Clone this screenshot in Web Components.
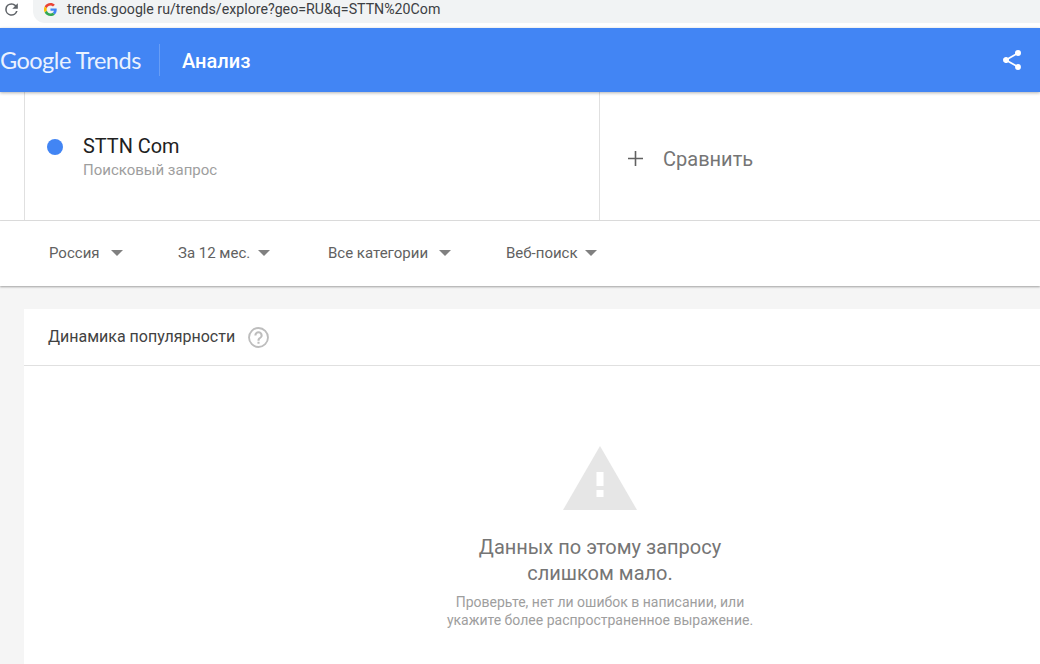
<!DOCTYPE html>
<html>
<head>
<meta charset="utf-8">
<title>Google Trends</title>
<style>
    html, body {
        margin: 0;
        height: 664px;
        overflow: hidden;
        background: #f5f5f5;
        font-family: Roboto, "Liberation Sans", sans-serif;
    }
</style>
</head>
<body>
<browser-bar url="trends.google ru/trends/explore?geo=RU&amp;q=STTN%20Com"></browser-bar>
<trends-header section="Анализ"></trends-header>
<term-row term="STTN Com" kind="Поисковый запрос" action="Сравнить"></term-row>
<filter-row>
    <filter-select style="width:129px">Россия</filter-select>
    <filter-select style="width:150px;--arrow-gap:8px">За 12 мес.</filter-select>
    <filter-select style="width:178px">Все категории</filter-select>
    <filter-select style="--arrow-gap:7px">Веб-поиск</filter-select>
</filter-row>
<trend-card heading="Динамика популярности">
    <empty-state title-text="Данных по этому запросу слишком мало.">
        Проверьте, нет ли ошибок в написании, или<br>укажите более распространенное выражение.
    </empty-state>
</trend-card>

<script>
class BrowserBar extends HTMLElement {

    constructor() {

        super();

        this.theRoot = this.attachShadow({mode: 'open'});
        this.theRoot.innerHTML = `
            <style>
                :host {
                    display: flex;
                    align-items: flex-start;
                    height: 28px;
                    background: #fff;
                    box-sizing: border-box;
                    overflow: hidden;
                }
                .reload {
                    width: 33px;
                    flex: none;
                }
                .reload svg {
                    display: block;
                    margin-left: 2px;
                }
                .omnibox {
                    flex: 1;
                    height: 23px;
                    display: flex;
                    align-items: flex-start;
                    background: #f1f3f4;
                    border-bottom-left-radius: 12px;
                    padding-left: 11px;
                }
                .omnibox svg {
                    flex: none;
                    margin-top: 3px;
                }
                .url {
                    margin-left: 10px;
                    font: 14.2px/18px Roboto, sans-serif;
                    color: #3c4043;
                    white-space: nowrap;
                }
            </style>
            <div class="reload">
                <svg width="19" height="19" viewBox="0 0 24 24"><path fill="#5f6368" d="M17.65 6.35A7.96 7.96 0 0 0 12 4a8 8 0 1 0 7.73 10h-2.08A6 6 0 1 1 12 6c1.66 0 3.14.69 4.22 1.78L13 11h7V4l-2.35 2.35z"/></svg>
            </div>
            <div class="omnibox">
                <svg width="13" height="13" viewBox="0 0 48 48">
                    <path fill="#ea4335" d="M24 9.5c3.5 0 6.700 1.200 9.200 3.600l6.900-6.900C35.900 2.400 30.500 0 24 0 14.600 0 6.500 5.400 2.600 13.200l8 6.200C12.500 13.700 17.800 9.500 24 9.500z"/>
                    <path fill="#4285f4" d="M46.900 24.500c0-1.600-.1-3.100-.4-4.500H24v9h12.900c-.6 3-2.200 5.500-4.700 7.200l7.700 6c4.500-4.200 7-10.300 7-17.700z"/>
                    <path fill="#fbbc05" d="M10.500 28.600A14.500 14.500 0 0 1 10.500 19.400l-8-6.200a24 24 0 0 0 0 21.600l8-6.200z"/>
                    <path fill="#34a853" d="M24 48c6.500 0 11.900-2.100 15.900-5.800l-7.700-6c-2.200 1.400-4.900 2.300-8.200 2.300-6.200 0-11.500-4.200-13.400-9.900l-8 6.200C6.500 42.600 14.600 48 24 48z"/>
                </svg>
                <span class="url"></span>
            </div>
        `;
    }

    connectedCallback() {

        this.theRoot.querySelector('.url').textContent = this.getAttribute('url');
    }
}

class TrendsHeader extends HTMLElement {

    constructor() {

        super();

        this.theRoot = this.attachShadow({mode: 'open'});
        this.theRoot.innerHTML = `
            <style>
                :host {
                    display: flex;
                    align-items: center;
                    height: 64px;
                    background: #4285f4;
                    color: #fff;
                    box-shadow: 0 1px 3px rgba(0, 0, 0, .3);
                    position: relative;
                    z-index: 2;
                }
                .logo {
                    width: 142px;
                    font: 400 23.5px/30px Lato, sans-serif;
                    letter-spacing: -.5px;
                    white-space: nowrap;
                    color: #eaf1fe;
                    flex: none;
                }
                .divider {
                    width: 1px;
                    height: 32px;
                    margin-left: 17px;
                    background: rgba(255, 255, 255, .2);
                    flex: none;
                }
                .section {
                    margin-left: 22px;
                    font: 500 20px/24px Roboto, sans-serif;
                    padding-top: 2px;
                    flex: 1;
                }
                svg {
                    flex: none;
                    margin-right: 16px;
                }
            </style>
            <div class="logo">Google Trends</div>
            <div class="divider"></div>
            <div class="section"></div>
            <svg width="24" height="24" viewBox="0 0 24 24"><path fill="#fff" d="M18 16.080c-.76 0-1.440.3-1.960.77L8.910 12.700c.05-.23.090-.46.090-.7s-.04-.47-.09-.7l7.050-4.110c.54.5 1.250.81 2.040.81a3 3 0 1 0-3-3c0 .24.040.47.090.7L8.040 9.810A2.990 2.990 0 0 0 3 12a3 3 0 0 0 5.040 2.190l7.120 4.160c-.05.21-.08.43-.08.65A2.920 2.920 0 1 0 18 16.080z"/></svg>
        `;
    }

    connectedCallback() {

        this.theRoot.querySelector('.section').textContent = this.getAttribute('section');
    }
}

class TermRow extends HTMLElement {

    constructor() {

        super();

        this.theRoot = this.attachShadow({mode: 'open'});
        this.theRoot.innerHTML = `
            <style>
                :host {
                    display: flex;
                    height: 129px;
                    background: #fff;
                    border-bottom: 1px solid #e0e0e0;
                    box-sizing: border-box;
                    padding-left: 24px;
                }
                .term {
                    width: 576px;
                    flex: none;
                    box-sizing: border-box;
                    border-left: 1px solid #e0e0e0;
                    border-right: 1px solid #e0e0e0;
                    display: flex;
                    align-items: flex-start;
                    padding: 44px 0 0 22px;
                }
                .dot {
                    width: 16px;
                    height: 16px;
                    margin-top: 3px;
                    border-radius: 50%;
                    background: #4285f4;
                    flex: none;
                }
                .labels {
                    margin-left: 20px;
                }
                .name {
                    font: 400 19.9px/22px Roboto, sans-serif;
                    color: #212121;
                }
                .kind {
                    font: 400 15px/17px Roboto, sans-serif;
                    margin-top: 4px;
                    color: #9e9e9e;
                }
                .compare {
                    flex: 1;
                    display: flex;
                    align-items: center;
                    padding-left: 28px;
                    height: 134px;
                    color: #757575;
                }
                .compare svg {
                    flex: none;
                    margin-top: -2px;
                }
                .action {
                    margin-left: 20px;
                    font: 400 20px/24px Roboto, sans-serif;
                }
            </style>
            <div class="term">
                <div class="dot"></div>
                <div class="labels">
                    <div class="name"></div>
                    <div class="kind"></div>
                </div>
            </div>
            <div class="compare">
                <svg width="15" height="15" viewBox="0 0 15 15"><path fill="#616161" d="M6.700 0h1.600v6.700H15v1.600H8.300V15H6.700V8.300H0V6.700h6.700z"/></svg>
                <span class="action"></span>
            </div>
        `;
    }

    connectedCallback() {

        this.theRoot.querySelector('.name').textContent = this.getAttribute('term');
        this.theRoot.querySelector('.kind').textContent = this.getAttribute('kind');
        this.theRoot.querySelector('.action').textContent = this.getAttribute('action');
    }
}

class FilterRow extends HTMLElement {

    constructor() {

        super();

        this.theRoot = this.attachShadow({mode: 'open'});
        this.theRoot.innerHTML = `
            <style>
                :host {
                    display: flex;
                    align-items: center;
                    box-sizing: border-box;
                    height: 65px;
                    padding: 0 0 2px 49px;
                    background: #fff;
                    box-shadow: 0 1px 2px rgba(0, 0, 0, .35);
                    position: relative;
                }
            </style>
            <slot></slot>
        `;
    }
}

class FilterSelect extends HTMLElement {

    constructor() {

        super();

        this.theRoot = this.attachShadow({mode: 'open'});
        this.theRoot.innerHTML = `
            <style>
                :host {
                    display: flex;
                    align-items: center;
                    flex: none;
                    font: 400 15px/20px Roboto, sans-serif;
                    color: #616161;
                    white-space: nowrap;
                }
                i {
                    width: 0;
                    height: 0;
                    margin-left: var(--arrow-gap, 11px);
                    margin-top: 1px;
                    border-left: 6px solid transparent;
                    border-right: 6px solid transparent;
                    border-top: 6px solid #808080;
                }
            </style>
            <slot></slot><i></i>
        `;
    }
}

class TrendCard extends HTMLElement {

    constructor() {

        super();

        this.theRoot = this.attachShadow({mode: 'open'});
        this.theRoot.innerHTML = `
            <style>
                :host {
                    display: block;
                    margin: 23px 0 0 24px;
                    background: #fff;
                    height: 355px;
                }
                header {
                    display: flex;
                    align-items: center;
                    height: 56px;
                    padding-left: 24px;
                    border-bottom: 1px solid #e0e0e0;
                    font: 400 16px/20px Roboto, sans-serif;
                    color: #424242;
                }
                svg {
                    margin-left: 11px;
                    flex: none;
                }
            </style>
            <header>
                <span class="heading"></span>
                <svg width="25" height="25" viewBox="0 0 24 24"><path fill="#bdbdbd" d="M11 18h2v-2h-2v2zm1-16a10 10 0 1 0 0 20 10 10 0 0 0 0-20zm0 18.200a8.200 8.200 0 1 1 0-16.400 8.200 8.200 0 0 1 0 16.400zM12 6a4 4 0 0 0-4 4h2a2 2 0 1 1 4 0c0 2-3 1.750-3 5h2c0-2.250 3-2.500 3-5a4 4 0 0 0-4-4z"/></svg>
            </header>
            <slot></slot>
        `;
    }

    connectedCallback() {

        this.theRoot.querySelector('.heading').textContent = this.getAttribute('heading');
    }
}

class EmptyState extends HTMLElement {

    constructor() {

        super();

        this.theRoot = this.attachShadow({mode: 'open'});
        this.theRoot.innerHTML = `
            <style>
                :host {
                    display: flex;
                    flex-direction: column;
                    align-items: center;
                    width: 360px;
                    margin-left: 396px;
                    padding-top: 80px;
                }
                svg {
                    display: block;
                }
                .title {
                    width: 270px;
                    margin-top: 24px;
                    text-align: center;
                    font: 400 20px/26px Roboto, sans-serif;
                    color: #757575;
                }
                .note {
                    margin-top: 7px;
                    text-align: center;
                    font: 400 14px/18px Roboto, sans-serif;
                    color: #9e9e9e;
                    white-space: nowrap;
                }
            </style>
            <svg width="74" height="64" viewBox="0 0 74 64"><path fill="#e6e6e6" d="M37 0l37 64H0z"/><path fill="#fff" d="M33.500 26h7v14h-7zM33.500 44h7v7h-7z"/></svg>
            <div class="title"></div>
            <div class="note"><slot></slot></div>
        `;
    }

    connectedCallback() {

        this.theRoot.querySelector('.title').textContent = this.getAttribute('title-text');
    }
}

window.customElements.define('browser-bar', BrowserBar);
window.customElements.define('trends-header', TrendsHeader);
window.customElements.define('term-row', TermRow);
window.customElements.define('filter-row', FilterRow);
window.customElements.define('filter-select', FilterSelect);
window.customElements.define('trend-card', TrendCard);
window.customElements.define('empty-state', EmptyState);
</script>
</body>
</html>
